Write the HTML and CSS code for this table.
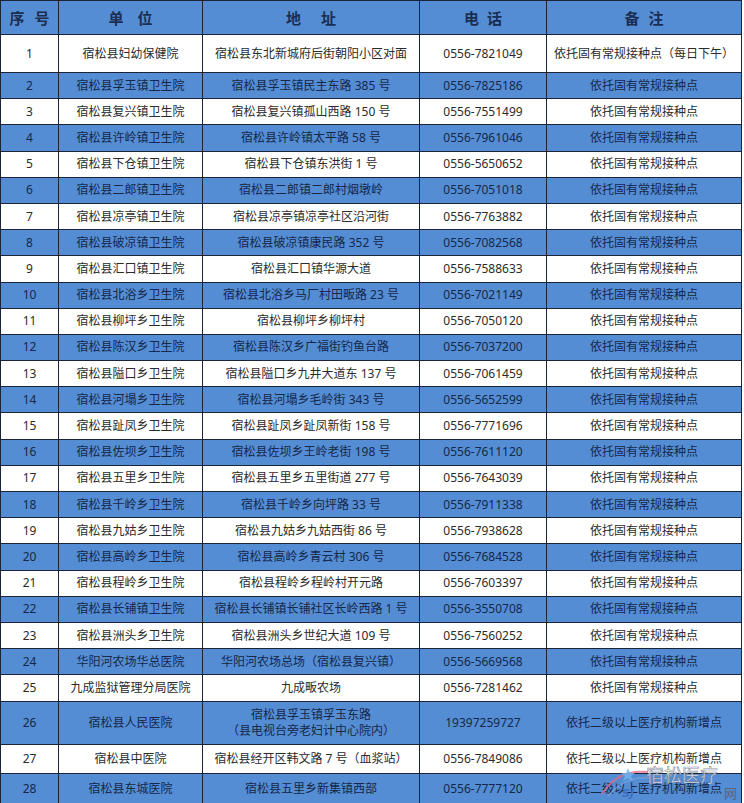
FILE: index.html
```html
<!DOCTYPE html>
<html lang="zh">
<head>
<meta charset="utf-8">
<title>宿松县接种点</title>
<link rel="stylesheet" href="styles.css">
</head>
<body>
<div class="page">
<table class="sheet">
  <colgroup>
    <col class="c-no"><col class="c-unit"><col class="c-addr"><col class="c-tel"><col class="c-note">
  </colgroup>
  <thead>
    <tr class="head">
      <th><span class="hw g10"><span>序</span><span>号</span></span></th>
      <th><span class="hw g14"><span>单</span><span>位</span></span></th>
      <th><span class="hw g20"><span>地</span><span>址</span></span></th>
      <th><span class="hw g8"><span>电</span><span>话</span></span></th>
      <th><span class="hw g9"><span>备</span><span>注</span></span></th>
    </tr>
  </thead>
  <tbody>
    <tr class="w tall"><td>1</td><td>宿松县妇幼保健院</td><td>宿松县东北新城府后街朝阳小区对面</td><td>0556-7821049</td><td>依托固有常规接种点（每日下午）</td></tr>
    <tr class="b"><td>2</td><td>宿松县孚玉镇卫生院</td><td>宿松县孚玉镇民主东路 385 号</td><td>0556-7825186</td><td>依托固有常规接种点</td></tr>
    <tr class="w"><td>3</td><td>宿松县复兴镇卫生院</td><td>宿松县复兴镇孤山西路 150 号</td><td>0556-7551499</td><td>依托固有常规接种点</td></tr>
    <tr class="b"><td>4</td><td>宿松县许岭镇卫生院</td><td>宿松县许岭镇太平路 58 号</td><td>0556-7961046</td><td>依托固有常规接种点</td></tr>
    <tr class="w"><td>5</td><td>宿松县下仓镇卫生院</td><td>宿松县下仓镇东洪街 1 号</td><td>0556-5650652</td><td>依托固有常规接种点</td></tr>
    <tr class="b"><td>6</td><td>宿松县二郎镇卫生院</td><td>宿松县二郎镇二郎村烟墩岭</td><td>0556-7051018</td><td>依托固有常规接种点</td></tr>
    <tr class="w"><td>7</td><td>宿松县凉亭镇卫生院</td><td>宿松县凉亭镇凉亭社区沿河街</td><td>0556-7763882</td><td>依托固有常规接种点</td></tr>
    <tr class="b"><td>8</td><td>宿松县破凉镇卫生院</td><td>宿松县破凉镇康民路 352 号</td><td>0556-7082568</td><td>依托固有常规接种点</td></tr>
    <tr class="w"><td>9</td><td>宿松县汇口镇卫生院</td><td>宿松县汇口镇华源大道</td><td>0556-7588633</td><td>依托固有常规接种点</td></tr>
    <tr class="b"><td>10</td><td>宿松县北浴乡卫生院</td><td>宿松县北浴乡马厂村田畈路 23 号</td><td>0556-7021149</td><td>依托固有常规接种点</td></tr>
    <tr class="w"><td>11</td><td>宿松县柳坪乡卫生院</td><td>宿松县柳坪乡柳坪村</td><td>0556-7050120</td><td>依托固有常规接种点</td></tr>
    <tr class="b"><td>12</td><td>宿松县陈汉乡卫生院</td><td>宿松县陈汉乡广福街钓鱼台路</td><td>0556-7037200</td><td>依托固有常规接种点</td></tr>
    <tr class="w"><td>13</td><td>宿松县隘口乡卫生院</td><td>宿松县隘口乡九井大道东 137 号</td><td>0556-7061459</td><td>依托固有常规接种点</td></tr>
    <tr class="b"><td>14</td><td>宿松县河塌乡卫生院</td><td>宿松县河塌乡毛岭街 343 号</td><td>0556-5652599</td><td>依托固有常规接种点</td></tr>
    <tr class="w"><td>15</td><td>宿松县趾凤乡卫生院</td><td>宿松县趾凤乡趾凤新街 158 号</td><td>0556-7771696</td><td>依托固有常规接种点</td></tr>
    <tr class="b"><td>16</td><td>宿松县佐坝乡卫生院</td><td>宿松县佐坝乡王岭老街 198 号</td><td>0556-7611120</td><td>依托固有常规接种点</td></tr>
    <tr class="w"><td>17</td><td>宿松县五里乡卫生院</td><td>宿松县五里乡五里街道 277 号</td><td>0556-7643039</td><td>依托固有常规接种点</td></tr>
    <tr class="b"><td>18</td><td>宿松县千岭乡卫生院</td><td>宿松县千岭乡向坪路 33 号</td><td>0556-7911338</td><td>依托固有常规接种点</td></tr>
    <tr class="w"><td>19</td><td>宿松县九姑乡卫生院</td><td>宿松县九姑乡九姑西街 86 号</td><td>0556-7938628</td><td>依托固有常规接种点</td></tr>
    <tr class="b"><td>20</td><td>宿松县高岭乡卫生院</td><td>宿松县高岭乡青云村 306 号</td><td>0556-7684528</td><td>依托固有常规接种点</td></tr>
    <tr class="w"><td>21</td><td>宿松县程岭乡卫生院</td><td>宿松县程岭乡程岭村开元路</td><td>0556-7603397</td><td>依托固有常规接种点</td></tr>
    <tr class="b"><td>22</td><td>宿松县长铺镇卫生院</td><td>宿松县长铺镇长铺社区长岭西路 1 号</td><td>0556-3550708</td><td>依托固有常规接种点</td></tr>
    <tr class="w"><td>23</td><td>宿松县洲头乡卫生院</td><td>宿松县洲头乡世纪大道 109 号</td><td>0556-7560252</td><td>依托固有常规接种点</td></tr>
    <tr class="b"><td>24</td><td>华阳河农场华总医院</td><td>华阳河农场总场（宿松县复兴镇）</td><td>0556-5669568</td><td>依托固有常规接种点</td></tr>
    <tr class="w"><td>25</td><td>九成监狱管理分局医院</td><td>九成畈农场</td><td>0556-7281462</td><td>依托固有常规接种点</td></tr>
    <tr class="b dbl"><td>26</td><td>宿松县人民医院</td><td>宿松县孚玉镇孚玉东路<br>（县电视台旁老妇计中心院内）</td><td>19397259727</td><td>依托二级以上医疗机构新增点</td></tr>
    <tr class="w mid"><td>27</td><td>宿松县中医院</td><td>宿松县经开区韩文路 7 号（血浆站）</td><td>0556-7849086</td><td>依托二级以上医疗机构新增点</td></tr>
    <tr class="b last"><td>28</td><td>宿松县东城医院</td><td>宿松县五里乡新集镇西部</td><td>0556-7777120</td><td>依托二级以上医疗机构新增点</td></tr>
  </tbody>
</table>
<div class="mark">
  <svg class="mark-logo" width="56" height="36" viewBox="0 0 56 36">
    <path d="M4 30 C14 14 30 6 50 8" fill="none" stroke="#e06a8a" stroke-width="2" opacity="0.8"/>
    <path d="M10 32 C20 20 34 12 52 14" fill="none" stroke="#7aa0d8" stroke-width="1.5" opacity="0.8"/>
    <path d="M30 4 L32 9 L37 9 L33 12 L35 17 L30 14 L25 17 L27 12 L23 9 L28 9 Z" fill="#6fb4f0" opacity="0.85"/>
    <text x="24" y="33" class="mark-sj">SJ</text>
  </svg>
  <span class="mark-title">宿松医疗</span>
  <span class="mark-net">网</span>
</div>
</div>
</body>
</html>
```

FILE: styles.css
```css
html, body {
  margin: 0;
  padding: 0;
  background: #ffffff;
}

.page {
  position: relative;
  width: 744px;
  height: 803px;
  overflow: hidden;
}

.sheet {
  border-collapse: collapse;
  table-layout: fixed;
  width: 741px;
  font-family: "Noto Sans", "Noto Sans CJK SC", sans-serif;
  font-size: 12px;
}

.c-no { width: 58px; }
.c-unit { width: 144px; }
.c-addr { width: 217px; }
.c-tel { width: 127px; }
.c-note { width: 195px; }

.sheet th,
.sheet td {
  border: 1px solid #1b2437;
  text-align: center;
  vertical-align: middle;
  padding: 0 2px;
  white-space: nowrap;
  line-height: 16px;
}

.head th {
  height: 33px;
  background: #548dd4;
  color: #1b2e52;
  font-family: "Noto Sans CJK SC", sans-serif;
  font-size: 15px;
  font-weight: 700;
}

.hw {
  display: inline-flex;
}
.g8 { gap: 8px; }
.g9 { gap: 9px; }
.g10 { gap: 10px; }
.g14 { gap: 14px; }
.g20 { gap: 20px; }

.w td {
  background: #ffffff;
  color: #2b2b2b;
}

.b td {
  background: #548dd4;
  color: #15284a;
}

.sheet tbody tr { height: 26.2px; }
.sheet tbody tr.tall { height: 38px; }
.sheet tbody tr.dbl { height: 43px; }
.sheet tbody tr.mid { height: 29px; }
.sheet tbody tr.last { height: 31px; }

.mark {
  position: absolute;
  left: 598px;
  top: 762px;
  width: 146px;
  height: 40px;
}

.mark-logo {
  position: absolute;
  left: 0;
  top: 2px;
}

.mark-sj {
  font-family: "DejaVu Sans", sans-serif;
  font-size: 11px;
  font-weight: 700;
  font-style: italic;
  fill: #3d6fc0;
}

.mark-title {
  position: absolute;
  left: 48px;
  top: 2px;
  font-family: "Noto Sans CJK SC", sans-serif;
  font-size: 18px;
  line-height: 20px;
  color: rgba(235, 240, 248, 0.85);
  -webkit-text-stroke: 0.6px rgba(90, 100, 120, 0.7);
}

.mark-net {
  position: absolute;
  left: 126px;
  top: 24px;
  font-family: "Noto Sans CJK SC", sans-serif;
  font-size: 13px;
  line-height: 14px;
  color: #5a6478;
}
```
